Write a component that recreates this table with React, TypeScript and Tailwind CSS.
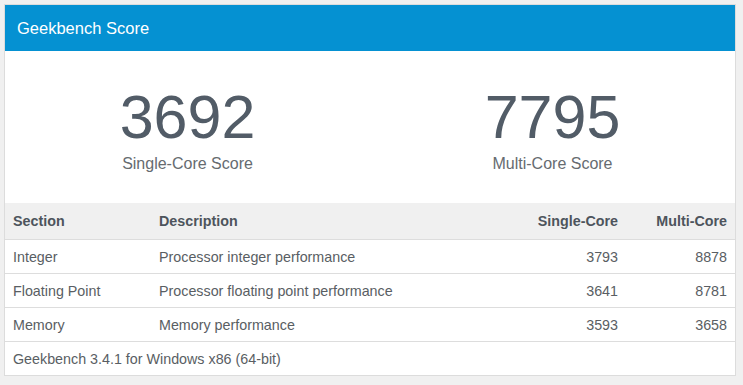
import React from "react";

const rows = [
  { s: "Integer", d: "Processor integer performance", sc: "3793", mc: "8878" },
  { s: "Floating Point", d: "Processor floating point performance", sc: "3641", mc: "8781" },
  { s: "Memory", d: "Memory performance", sc: "3593", mc: "3658" },
];

export default function App() {
  return (
    <div
      className="w-[743px] h-[385px] bg-[#f0f0f0] pt-[4px] pl-[4px] pr-[7px]"
      style={{ fontFamily: '"Liberation Sans", Arial, sans-serif' }}
    >
      <div className="border border-[#dcdcdc] bg-white h-[372px] flex flex-col">
        <div className="h-[46px] bg-[#0591d2] flex items-center pl-[12px] pt-[1px] text-white text-[16.5px]">
          Geekbench Score
        </div>
        <div className="h-[152px] grid grid-cols-2">
          <div className="flex flex-col items-center pt-[36px]">
            <div className="text-[61px] leading-[61px] text-[#525c67]">3692</div>
            <div className="text-[16px] leading-[20px] text-[#666b70] mt-[6px]">Single-Core Score</div>
          </div>
          <div className="flex flex-col items-center pt-[36px]">
            <div className="text-[61px] leading-[61px] text-[#525c67]">7795</div>
            <div className="text-[16px] leading-[20px] text-[#666b70] mt-[6px]">Multi-Core Score</div>
          </div>
        </div>
        <div className="grid grid-cols-[146px_1fr_120px_109px] h-[37px] pt-[2px] bg-[#f0f0f0] border-b border-[#dddddd] text-[14.3px] font-bold text-[#4d545c] items-center">
          <div className="pl-[8px]">Section</div>
          <div className="pl-[8px]">Description</div>
          <div className="pr-[8px] text-right">Single-Core</div>
          <div className="pr-[8px] text-right">Multi-Core</div>
        </div>
        {rows.map((r) => (
          <div
            key={r.s}
            className="grid grid-cols-[146px_1fr_120px_109px] h-[34px] pt-[3px] border-b border-[#dddddd] text-[14.3px] text-[#595e63] items-center"
          >
            <div className="pl-[8px]">{r.s}</div>
            <div className="pl-[8px]">{r.d}</div>
            <div className="pr-[8px] text-right">{r.sc}</div>
            <div className="pr-[8px] text-right">{r.mc}</div>
          </div>
        ))}
        <div className="flex-1 flex items-center pl-[8px] pt-[3px] text-[14.3px] text-[#595e63]">
          Geekbench 3.4.1 for Windows x86 (64-bit)
        </div>
      </div>
    </div>
  );
}
